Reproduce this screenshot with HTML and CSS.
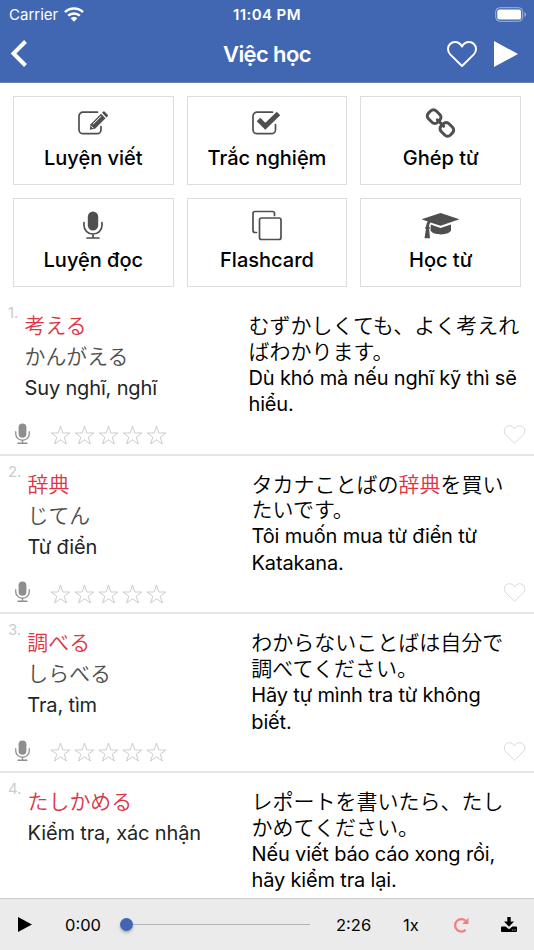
FILE: index.html
```html
<!DOCTYPE html>
<html lang="vi">

<head>
  <meta charset="UTF-8" />
  <meta name="viewport" content="width=device-width, initial-scale=1.0" />
  <title>Việc học</title>
  <link rel="stylesheet" href="styles.css">
</head>

<body>
  <svg class="sprite">
    <symbol id="mic" viewBox="0 0 20 28">
      <rect x="4.800" y="0.500" width="10.400" height="19" rx="5.200" fill="currentColor" />
      <path d="M1 11.500v3a9 8.500 0 0 0 18 0v-3M10 23v4M4 27h12" fill="none" stroke="currentColor" stroke-width="1.700" stroke-linecap="round" />
    </symbol>
    <symbol id="heart" viewBox="0 0 30 26">
      <path d="M15 25L3.400 13.600C1.600 11.800 1 10 1 8a7 7 0 0 1 7-7c3 0 5.400 1.600 7 4.400C16.600 2.600 19 1 22 1a7 7 0 0 1 7 7c0 2-.6 3.800-2.400 5.600z" fill="none" stroke="currentColor" stroke-linejoin="round" />
    </symbol>
    <symbol id="stars" viewBox="0 0 118 20">
      <g fill="none" stroke="currentColor" stroke-width="1">
        <path id="star" d="M10.500 1l2.300 7h7.200l-5.800 4.200 2.200 6.800-5.900-4.200-5.900 4.200 2.200-6.800L1 8h7.200z" />
        <use href="#star" x="24" />
        <use href="#star" x="48" />
        <use href="#star" x="72" />
        <use href="#star" x="96" />
      </g>
    </symbol>
  </svg>

  <div class="phone">
    <header class="header">
      <div class="status">
        <div class="carrier">
          <span>Carrier</span>
          <svg class="wifi" viewBox="0 0 20 15">
            <path d="M1 5.200a13 13 0 0 1 18 0M4.200 8.700a8.400 8.400 0 0 1 11.600 0" fill="none" stroke="#fff" stroke-width="2.500" />
            <path d="M6.600 11.300a5 5 0 0 1 6.800 0L10 14.700z" fill="#fff" />
          </svg>
        </div>
        <div class="time">11:04 PM</div>
        <svg class="battery" viewBox="0 0 32 15">
          <rect x="0.700" y="0.700" width="27" height="13.600" rx="4" fill="none" stroke="#fff" stroke-opacity=".5" />
          <rect x="2.300" y="2.400" width="23.800" height="10.200" rx="2.200" fill="#fff" />
          <path d="M29.500 5v5c2-.8 2-4.200 0-5z" fill="#fff" fill-opacity=".5" />
        </svg>
      </div>
      <div class="nav">
        <svg class="back" viewBox="0 0 17 28"><path d="M15.500 1.500L3.500 13.500l12 12" fill="none" stroke="#fff" stroke-width="4" /></svg>
        <h1 class="title">Việc học</h1>
        <div class="nav-right">
          <svg class="nav-heart"><use href="#heart" /></svg>
          <svg class="nav-play" viewBox="0 0 24 26"><path d="M0 0l24 13L0 26z" fill="#fff" /></svg>
        </div>
      </div>
    </header>

    <div class="menu">
      <div class="tile">
        <svg class="icon" viewBox="0 0 40 32">
          <path d="M24.500 5.200H10a4 4 0 0 0-4 4v13.500a4 4 0 0 0 4 4h14a4 4 0 0 0 4-4V19.500" fill="none" stroke="#4f4f4f" stroke-width="1.700" stroke-linecap="round" />
          <path d="M17.600 17.200L28 6.800l4.500 4.500-10.400 10.400-5.300 1z" fill="#4f4f4f" />
          <path d="M29 5.800l1-1q1-.9 2 .1l2.500 2.500q.9 1 0 2l-1 1z" fill="#4f4f4f" />
          <path d="M20 17.200l8-8M18.300 19.200l2 2" fill="none" stroke="#fff" stroke-width="1" />
        </svg>
        <div class="tile-name">Luyện viết</div>
      </div>
      <div class="tile">
        <svg class="icon" viewBox="0 0 40 32">
          <path d="M25.500 5.200H10a4 4 0 0 0-4 4v13.500a4 4 0 0 0 4 4h14.500a4 4 0 0 0 4-4V17.500" fill="none" stroke="#4f4f4f" stroke-width="1.700" stroke-linecap="round" />
          <path d="M11.500 12.500l6.800 6.700L31.500 6.500" fill="none" stroke="#4f4f4f" stroke-width="5" />
        </svg>
        <div class="tile-name">Trắc nghiệm</div>
      </div>
      <div class="tile">
        <svg class="icon" viewBox="0 0 40 32">
          <g fill="none" stroke="#4f4f4f" stroke-width="3" transform="rotate(45 19.500 16)">
            <rect x="4" y="10.500" width="13" height="11" rx="4" />
            <rect x="22" y="10.500" width="13" height="11" rx="4" />
            <path d="M15 16h9" stroke-linecap="round" />
          </g>
        </svg>
        <div class="tile-name">Ghép từ</div>
      </div>
      <div class="tile">
        <svg class="icon tile-mic"><use href="#mic" /></svg>
        <div class="tile-name">Luyện đọc</div>
      </div>
      <div class="tile">
        <svg class="icon" viewBox="0 0 40 32">
          <path d="M9.500 23.500H8a2 2 0 0 1-2-2v-17a2 2 0 0 1 2-2h17.500a2 2 0 0 1 2 2v2" fill="none" stroke="#4f4f4f" stroke-width="1.700" stroke-linecap="round" />
          <rect x="12.500" y="9" width="21.500" height="21.500" rx="2" fill="none" stroke="#4f4f4f" stroke-width="1.700" />
        </svg>
        <div class="tile-name">Flashcard</div>
      </div>
      <div class="tile">
        <svg class="icon" viewBox="0 0 40 32">
          <path d="M19.500 4l19 6.300-19 6.500-10-3.200q-1.500 1.500-1.500 4c1.300.8 1 2 .2 2.700l.8 9H3.500l1.400-9c-1-.8-1-2 .2-2.700.1-2.200.7-3.800 1.700-5.100L.5 10.300z" fill="#4f4f4f" />
          <path d="M9.700 15.600l9.800 3.300 10.500-3.400v6c-3 5.200-17.500 5.200-20.500 0z" fill="#4f4f4f" />
        </svg>
        <div class="tile-name">Học từ</div>
      </div>
    </div>

    <div class="list">
      <div class="item">
        <div class="content">
          <span class="num">1.</span>
          <div class="word">
            <p class="kanji">考える</p>
            <p class="kana">かんがえる</p>
            <p class="mean">Suy nghĩ, nghĩ</p>
          </div>
          <div class="example">むずかしくても、よく考えれ<br>ばわかります。<br><span class="vi">Dù khó mà nếu nghĩ kỹ thì sẽ<br>hiểu.</span></div>
        </div>
        <div class="actions">
          <svg class="mic"><use href="#mic" /></svg>
          <svg class="stars"><use href="#stars" /></svg>
          <svg class="like"><use href="#heart" /></svg>
        </div>
      </div>
      <div class="item">
        <div class="content">
          <span class="num">2.</span>
          <div class="word">
            <p class="kanji">辞典</p>
            <p class="kana">じてん</p>
            <p class="mean">Từ điển</p>
          </div>
          <div class="example">タカナことばの<span class="red">辞典</span>を買い<br>たいです。<br><span class="vi">Tôi muốn mua từ điển từ<br>Katakana.</span></div>
        </div>
        <div class="actions">
          <svg class="mic"><use href="#mic" /></svg>
          <svg class="stars"><use href="#stars" /></svg>
          <svg class="like"><use href="#heart" /></svg>
        </div>
      </div>
      <div class="item">
        <div class="content">
          <span class="num">3.</span>
          <div class="word">
            <p class="kanji">調べる</p>
            <p class="kana">しらべる</p>
            <p class="mean">Tra, tìm</p>
          </div>
          <div class="example">わからないことばは自分で<br>調べてください。<br><span class="vi">Hãy tự mình tra từ không<br>biết.</span></div>
        </div>
        <div class="actions">
          <svg class="mic"><use href="#mic" /></svg>
          <svg class="stars"><use href="#stars" /></svg>
          <svg class="like"><use href="#heart" /></svg>
        </div>
      </div>
      <div class="item">
        <div class="content">
          <span class="num">4.</span>
          <div class="word">
            <p class="kanji">たしかめる</p>
            <p class="mean">Kiểm tra, xác nhận</p>
          </div>
          <div class="example">レポートを書いたら、たし<br>かめてください。<br><span class="vi">Nếu viết báo cáo xong rồi,<br>hãy kiểm tra lại.</span></div>
        </div>
      </div>
    </div>

    <footer class="player">
      <svg class="play" viewBox="0 0 14 15"><path d="M0 0l14 7.500L0 15z" /></svg>
      <span class="current">0:00</span>
      <div class="slider"><div class="thumb"></div><div class="track"></div></div>
      <span class="total">2:26</span>
      <span class="speed">1x</span>
      <svg class="repeat" viewBox="0 0 16 16">
        <path d="M12.600 3.900A6.200 6.200 0 1 0 12.600 12.900" fill="none" stroke="#f08080" stroke-width="2.300" />
        <path d="M15.500.8v6.300H9.200z" fill="#f08080" />
      </svg>
      <svg class="download" viewBox="0 0 16 15">
        <path d="M6.300 0h3.400v4.500H13L8 9.700 3 4.500h3.300z" />
        <path d="M1 9.500h3.600L8 12.300l3.400-2.800H15q1 0 1 1v3.500q0 1-1 1H1q-1 0-1-1v-3.500q0-1 1-1z" />
        <path d="M11.300 13h1M13.500 13h1" stroke="#ebebeb" />
      </svg>
    </footer>
  </div>
</body>

</html>
```
FILE: styles.css
```css
* {
  margin: 0;
  padding: 0;
  box-sizing: border-box;
}

body {
  background-color: #fff;
  color: #000;
  font-family: Inter, "Noto Sans CJK JP", sans-serif;
}

svg {
  display: block;
  flex-shrink: 0;
}

.sprite {
  display: none;
}

.phone {
  width: 534px;
  height: 950px;
  display: flex;
  flex-direction: column;
  overflow: hidden;
}

/* header */
.header {
  height: 83px;
  flex-shrink: 0;
  color: #fff;
  background-color: #4267b2;
  border-bottom: 1px solid #6580b0;
}

.status {
  height: 28px;
  padding: 0 8px;
  display: grid;
  grid-template-columns: 1fr auto 1fr;
  align-items: center;
  font-size: 15px;
}

.carrier {
  padding-left: 1px;
  display: flex;
  align-items: center;
  gap: 6px;
}

.wifi {
  width: 20px;
  height: 15px;
}

.time {
  font-weight: 600;
  font-size: 15px;
  letter-spacing: 0.4px;
}

.battery {
  width: 32px;
  height: 15px;
  margin-right: -1px;
  justify-self: end;
}

.nav {
  height: 52px;
  padding: 0 16px 0 10px;
  display: grid;
  grid-template-columns: 1fr auto 1fr;
  align-items: center;
}

.back {
  width: 17px;
  height: 28px;
}

.title {
  margin-left: 6px;
  font-size: 22px;
  line-height: 28px;
  font-weight: 600;
  letter-spacing: -0.6px;
}

.nav-right {
  display: flex;
  justify-content: flex-end;
  align-items: center;
  gap: 17px;
}

.nav-heart {
  width: 30px;
  height: 26px;
  stroke-width: 2;
}

.nav-play {
  width: 24px;
  height: 26px;
}

/* menu */
.menu {
  padding: 13px 13px 10px;
  display: grid;
  grid-template-columns: repeat(3, 1fr);
  gap: 13px;
}

.tile {
  height: 89px;
  padding-top: 10px;
  border: 1px solid #dddddf;
  display: flex;
  flex-direction: column;
  align-items: center;
}

.icon {
  width: 40px;
  height: 32px;
  color: #4f4f4f;
}

.tile-mic {
  width: 20px;
  height: 28px;
  margin: 2px 0;
}

.tile-name {
  margin-top: 6px;
  font-size: 20px;
  line-height: 26px;
  font-weight: 500;
}

/* word list */
.list {
  flex: 1;
  overflow: hidden;
}

.item {
  height: 158.7px;
  border-bottom: 2px solid #e4e6ea;
}

.content {
  height: 121px;
  display: flex;
  align-items: flex-start;
}

.num {
  margin: 7px 6.5px 0 8px;
  color: #ccc;
  font-size: 15px;
  line-height: 18px;
  letter-spacing: -0.2px;
}

.word {
  width: 224px;
  padding-top: 13px;
  flex-shrink: 0;
}

.word p {
  height: 31px;
  line-height: 31px;
  white-space: nowrap;
}

.kanji,
.kana {
  font-size: 20.9px;
  font-weight: 350;
}

.kanji,
.red {
  color: #dc3545;
}

.kana {
  color: #4f4f4f;
}

.word .mean {
  color: #212529;
  font-size: 20px;
  line-height: 32px;
  letter-spacing: -0.15px;
}

.example {
  padding-top: 16px;
  font-size: 21px;
  line-height: 25.8px;
  font-weight: 350;
  white-space: nowrap;
}

.vi {
  font-size: 20px;
  font-weight: 400;
  letter-spacing: -0.17px;
}

.actions {
  height: 30px;
  padding: 0 8px 0 15px;
  display: flex;
  align-items: center;
}

.mic {
  width: 15px;
  height: 21px;
  color: #8e8e8e;
}

.stars {
  width: 118px;
  height: 20px;
  margin: 4px 0 0 20px;
  color: #ccc;
}

.like {
  width: 23px;
  height: 19px;
  margin: 2px 0 0 auto;
  color: #ccc;
}

/* player */
.player {
  height: 52px;
  padding: 0 17px 0 18px;
  flex-shrink: 0;
  display: flex;
  align-items: center;
  background-color: #ebebeb;
  border-top: 1px solid #ccc;
  font-size: 16.5px;
}

.play {
  width: 14px;
  height: 15px;
}

.current {
  width: 55px;
  margin-left: 33px;
}

.slider {
  width: 190px;
  display: flex;
  align-items: center;
}

.thumb {
  width: 13px;
  height: 13px;
  border-radius: 50%;
  background-color: #4267b2;
  box-shadow: 0 2px 3px rgba(0, 0, 0, .25);
}

.track {
  flex: 1;
  height: 1px;
  background-color: #b5b5b5;
}

.total {
  width: 67px;
  margin-left: 26px;
}

.repeat {
  width: 16px;
  height: 16px;
  margin-left: auto;
}

.download {
  width: 16px;
  height: 15px;
  margin-left: 32px;
}
```
